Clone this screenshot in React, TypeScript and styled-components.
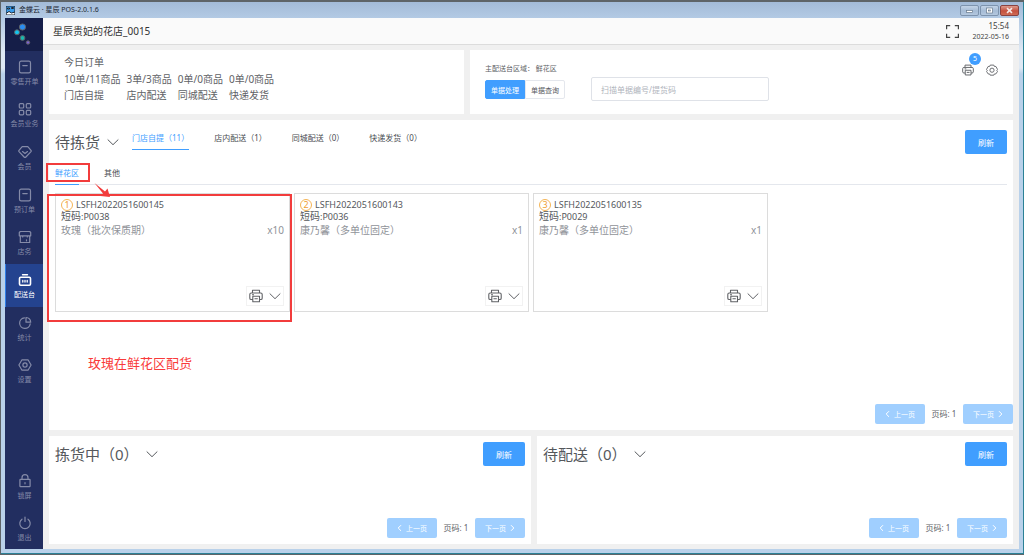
import React from "react";
import styled, { createGlobalStyle, css } from "styled-components";

const Global = createGlobalStyle`
  * { box-sizing: border-box; }
  body { margin: 0; color: #606266; font-family: "Noto Sans", "Noto Sans CJK SC", sans-serif; font-size: 8px; }
  button, input { font: inherit; color: inherit; margin: 0; }
  button { padding: 0; border: 0; background: none; cursor: pointer; }
  h1, h2, h3, p, ul, ol { margin: 0; padding: 0; font-weight: 400; list-style: none; }
  a { color: inherit; text-decoration: none; }
  svg { display: block; flex: none; fill: none; stroke: currentColor; }
`;

/* ---------- window frame ---------- */
const Desktop = styled.div`
  min-height: 100vh;
  display: flex;
  padding: 2px 0 1px 1px;
  background: #5e6468;
`;
const Window = styled.div`
  flex: 1;
  min-width: 0;
  display: flex;
  flex-direction: column;
  padding: 0 4px 4px;
  border-right: 1px solid #2b8196;
  border-bottom: 1px solid #2b8196;
  background: linear-gradient(#a3bbd8 0, #b3cae4 16px, #dfe9f4 50px, #dfe9f4 66px, #b9d1ea 72px);
`;
const TitleBar = styled.header`
  height: 16px;
  display: flex;
  align-items: center;
  gap: 4px;
  padding-left: 1px;
  color: #1c2733;
`;
const TitleText = styled.h1`
  flex: 1;
  font-size: 7px;
  line-height: 12px;
`;
const WindowButtons = styled.div`
  display: flex;
  gap: 1px;
`;
const WindowButton = styled.button<{ $close?: boolean }>`
  width: 19px;
  height: 11px;
  display: grid;
  place-items: center;
  border: 1px solid ${(p) => (p.$close ? "#8a4240" : "#7d93ad")};
  border-radius: 2px;
  color: ${(p) => (p.$close ? "#f4e6e4" : "#f6f8fa")};
  background: ${(p) =>
    p.$close ? "linear-gradient(#dc9a8c, #c4503e 55%, #cf6b54)" : "linear-gradient(#c3d3e6, #a5bbd5 55%, #b4c8df)"};
`;
const Client = styled.div`
  flex: 1;
  display: flex;
  background: #f0f0f0;
`;

/* ---------- sidebar ---------- */
const Sidebar = styled.nav`
  flex: 0 0 38px;
  display: flex;
  flex-direction: column;
  background: #222e60;
`;
const Logo = styled.div`
  height: 33px;
  display: grid;
  place-items: center;
  background: #151e48;
`;
const NavList = styled.ul<{ $rows: number; $height: number }>`
  display: grid;
  grid-template-rows: repeat(${(p) => p.$rows}, 1fr);
  height: ${(p) => p.$height}px;
`;
const Spacer = styled.div`
  flex: 1;
`;
const NavLink = styled.a<{ $active?: boolean }>`
  height: 100%;
  display: flex;
  flex-direction: column;
  align-items: center;
  justify-content: center;
  gap: 3px;
  padding-top: 2px;
  font-size: 7px;
  line-height: 10px;
  color: #858ba8;
  border-left: 1px solid transparent;
  ${(p) =>
    p.$active &&
    css`
      color: #fff;
      background: #24438f;
      border-color: #2f7fe8;
    `}
`;

/* ---------- main area ---------- */
const Main = styled.main`
  flex: 1;
  min-width: 0;
  display: flex;
  flex-direction: column;
`;
const StoreBar = styled.div`
  height: 27px;
  display: flex;
  align-items: center;
  gap: 13px;
  padding: 0 10px;
  background: #fafafa;
  border-bottom: 1px solid #dcdcdc;
  color: #444;
`;
const StoreName = styled.h2`
  flex: 1;
  font-size: 10px;
  line-height: 14px;
  color: #333;
`;
const Clock = styled.time`
  text-align: right;
  font-size: 8px;
  line-height: 11px;
`;
const ClockDate = styled.span`
  display: block;
  font-size: 7px;
`;
const Panels = styled.div`
  flex: 1;
  display: grid;
  grid-template-rows: 64px 1fr 108px;
  gap: 6px;
  padding: 5px 6px;
`;
const PanelRow = styled.div<{ $columns: string }>`
  display: grid;
  grid-template-columns: ${(p) => p.$columns};
  gap: 6px;
`;
const Panel = styled.section`
  background: #fff;
  min-width: 0;
`;

/* ---------- order summary ---------- */
const Summary = styled(Panel)`
  padding: 4px 15px;
  font-size: 10px;
  line-height: 16px;
`;
const SummaryTitle = styled.h3`
  font-size: 10px;
  line-height: 16px;
  margin-bottom: 1px;
`;
const SummaryList = styled.ul`
  display: flex;
  gap: 6px;
`;

/* ---------- search panel ---------- */
const Search = styled(Panel)`
  display: flex;
  align-items: flex-start;
  padding: 12px 15px;
`;
const Mode = styled.div`
  display: flex;
  flex-direction: column;
  gap: 4px;
`;
const AreaText = styled.p`
  font-size: 7px;
  line-height: 14px;
`;
const Segments = styled.div`
  display: flex;
`;
const Segment = styled.button<{ $active?: boolean }>`
  width: 40px;
  height: 19px;
  font-size: 7px;
  border: 1px solid ${(p) => (p.$active ? "#409eff" : "#e4e7ed")};
  border-radius: ${(p) => (p.$active ? "2px 0 0 2px" : "0 2px 2px 0")};
  background: ${(p) => (p.$active ? "#409eff" : "#fff")};
  color: ${(p) => (p.$active ? "#fff" : "#55585e")};
`;
const ScanInput = styled.input`
  width: 178px;
  height: 24px;
  margin: 15px 0 0 26px;
  padding: 0 9px;
  border: 1px solid #dfe2e8;
  border-radius: 2px;
  background: #fff;
  &::placeholder { color: #b0b4bc; opacity: 1; }
`;
const Tools = styled.div`
  flex: 1;
  display: flex;
  justify-content: flex-end;
  gap: 12px;
  padding-top: 2px;
`;
const ToolButton = styled.button`
  position: relative;
`;
const Badge = styled.span`
  position: absolute;
  left: 7px;
  top: -11px;
  width: 12px;
  height: 12px;
  border-radius: 50%;
  background: #409eff;
  color: #fff;
  font-size: 7px;
  line-height: 12px;
  text-align: center;
`;

/* ---------- boards ---------- */
const Board = styled(Panel)`
  position: relative;
  display: flex;
  flex-direction: column;
  padding: 6px;
`;
const WideBoard = styled(Board)`
  padding-right: 0;
`;
const BoardHead = styled.div<{ $wide?: boolean }>`
  display: flex;
  align-items: flex-start;
  padding: ${(p) => (p.$wide ? "4px 6px 0 0" : "0")};
`;
const BoardTitle = styled.button`
  height: 24px;
  display: flex;
  align-items: center;
  gap: 7px;
  margin-right: 13px;
  font-size: 15px;
  line-height: 24px;
  color: #55585c;
`;
const Tabs = styled.div`
  flex: 1;
  display: flex;
  gap: 25px;
`;
const Tab = styled.button<{ $active?: boolean }>`
  height: 20px;
  padding-bottom: 3px;
  font-size: 8px;
  line-height: 16px;
  color: ${(p) => (p.$active ? "#409eff" : "#4a4d52")};
  border-bottom: 1px solid ${(p) => (p.$active ? "#409eff" : "transparent")};
`;
const AreaTabs = styled.div`
  display: flex;
  gap: 25px;
  margin: 12px 6px 8px 0;
  border-bottom: 1px solid #e4e7ed;
`;
const AreaTab = styled(Tab)`
  position: relative;
  height: 19px;
  padding-bottom: 4px;
  margin-bottom: -1px;
  line-height: 14px;
`;
const RefreshButton = styled.button`
  width: 42px;
  height: 24px;
  margin-left: auto;
  border-radius: 2px;
  background: #409eff;
  color: #fff;
`;
const Cards = styled.ul`
  display: grid;
  grid-template-columns: repeat(4, 1fr);
  gap: 4px;
  margin-right: 6px;
`;
const Card = styled.li`
  position: relative;
  min-height: 119px;
  display: flex;
  flex-direction: column;
  padding: 5px;
  border: 1px solid #dcdcdc;
  font-size: 10px;
`;
const CardCode = styled.h3`
  display: flex;
  align-items: center;
  gap: 3px;
  font-size: 9px;
  line-height: 12px;
  color: #55585c;
`;
const Rank = styled.span`
  width: 12px;
  height: 12px;
  border: 1px solid #f5b556;
  border-radius: 50%;
  color: #f0a030;
  line-height: 10px;
  text-align: center;
`;
const ShortCode = styled.p`
  font-size: 10px;
  line-height: 11px;
  color: #55585c;
`;
const Latin = styled.span`
  font-size: 9px;
`;
const Item = styled.p`
  display: flex;
  justify-content: space-between;
  margin-top: 1px;
  line-height: 14px;
  color: #909399;
`;
const CardActions = styled.div`
  display: flex;
  align-items: center;
  gap: 6px;
  height: 20px;
  margin: auto 0 0 auto;
  padding: 0 2px;
  border: 1px solid #f2f2f2;
`;
const Pager = styled.div`
  display: flex;
  justify-content: flex-end;
  align-items: center;
  margin-top: auto;
`;
const PageText = styled.span`
  width: 38px;
  text-align: center;
  white-space: pre;
  line-height: 12px;
`;
const PageButton = styled.button`
  width: 50px;
  height: 20px;
  display: flex;
  align-items: center;
  justify-content: center;
  gap: 4px;
  border-radius: 2px;
  background: #a0cfff;
  color: #fff;
  font-size: 7px;
`;

/* ---------- red annotations drawn over the page ---------- */
const MarkBox = styled.span<{ $inset: string }>`
  position: absolute;
  inset: ${(p) => p.$inset};
  border: 2px solid #f23c3c;
  pointer-events: none;
`;
const Arrow = styled.svg`
  position: absolute;
  left: 39px;
  top: 17px;
  pointer-events: none;
  z-index: 1;
`;
const Note = styled.p`
  position: absolute;
  left: 39px;
  top: 233px;
  font-size: 13px;
  line-height: 20px;
  color: #f93a3a;
`;

/* ---------- icons ---------- */
const NavIcon = ({ children }: { children: React.ReactNode }) => (
  <svg width="14" height="14" viewBox="0 0 14 14" strokeWidth="1.2" strokeLinejoin="round" strokeLinecap="round">
    {children}
  </svg>
);
const orderIcon = (
  <NavIcon>
    <rect x="1.5" y="1.2" width="11" height="11.6" rx="1.6" />
    <path d="M4.8 5.6h4.4" />
  </NavIcon>
);
const gridIcon = (
  <NavIcon>
    <rect x="1.3" y="1.6" width="4.4" height="4.4" rx="1" />
    <rect x="8.3" y="1.6" width="4.4" height="4.4" rx="1" />
    <rect x="1.3" y="8.4" width="4.4" height="4.4" rx="1" />
    <rect x="8.3" y="8.4" width="4.4" height="4.4" rx="1" />
  </NavIcon>
);
const memberIcon = (
  <NavIcon>
    <path d="M4.2 1.6h5.6L13 5.4c.3.5.3.9 0 1.3L7.9 12c-.6.6-1.2.6-1.8 0L1 6.7c-.3-.4-.3-.8 0-1.3z" />
    <path d="M4.5 6.6 7 8.5l2.5-1.9" />
  </NavIcon>
);
const shopIcon = (
  <NavIcon>
    <path d="M2.3 1.5h9.4l1 1v3.300H1.300V2.500zM2.300 5.800v6.700h9.400V5.800M4.700 5.800v1.200M9.300 5.800v1.200M8.500 9.800v1" />
  </NavIcon>
);
const deskIcon = (
  <NavIcon>
    <path d="M4.5 1.7h5" strokeWidth="1.4" />
    <rect x="1.5" y="4.3" width="11" height="8" rx="1.2" strokeWidth="1.6" />
    <path d="M4.8 7.5v1.6M7 7.5v1.6M9.2 7.5v1.6" strokeWidth="1.3" />
  </NavIcon>
);
const chartIcon = (
  <NavIcon>
    <path d="M6.4 1.8A5.3 5.3 0 1 0 12.2 7.8M8 1.5v4.7h4.7A5 5 0 0 0 8 1.5z" />
  </NavIcon>
);
const hexIcon = (
  <NavIcon>
    <path d="M4 1.8h6L13.1 7 10 12.2H4L.9 7z" />
    <circle cx="7" cy="7" r="2.1" />
  </NavIcon>
);
const lockIcon = (
  <NavIcon>
    <rect x="1.9" y="5.3" width="10.2" height="7.4" rx=".6" />
    <path d="M4 5.2V3.7a3 3 0 0 1 6 0v1.5M7 8.6v1.2" />
  </NavIcon>
);
const powerIcon = (
  <NavIcon>
    <path d="M4 3.2a5.2 5.2 0 1 0 6 0M7 1v4.5" />
  </NavIcon>
);
const Chevron = () => (
  <svg width="12" height="12" viewBox="0 0 12 12" strokeWidth="1">
    <path d="M.7 3.5 6 8.7l5.3-5.2" />
  </svg>
);
const PrintIcon = ({ size }: { size: number }) => (
  <svg width={size} height={size} viewBox="0 0 14 14" strokeWidth="1.1" strokeLinejoin="round">
    <path d="M3.5 4V1.3h7V4M3.5 10.5H2.2C1.3 10.5.8 10 .8 9.2V5.4C.8 4.6 1.300 4 2.200 4h9.600c.9 0 1.400.6 1.400 1.400v3.800c0 .8-.5 1.300-1.400 1.300h-1.300M3.800 7.300h6.700v5.500H3.800zM3 5.700h2M5.500 9.800h3.300" />
  </svg>
);
const GearIcon = () => (
  <svg width="12" height="12" viewBox="0 0 12 12" strokeWidth=".9" strokeLinejoin="round">
    <path d="M4.2 1.100h3.600l.5 1.300 1.600.1 1.700 3-.8.9.8.9-1.700 2.600-1.600.1-.5 1.200H4.200l-.5-1.200-1.600-.1L.5 7.300l.8-.9-.8-.9 1.600-3 1.600-.1z" />
    <circle cx="6" cy="6.200" r="2.100" />
  </svg>
);
const Caret = ({ next }: { next?: boolean }) => (
  <svg width="5" height="8" viewBox="0 0 5 8" strokeWidth="1">
    <path d={next ? "M1 1.2 3.8 4 1 6.8" : "M4 1.2 1.2 4 4 6.8"} />
  </svg>
);

/* ---------- data ---------- */
const navItems = [
  { label: "零售开单", icon: orderIcon },
  { label: "会员业务", icon: gridIcon },
  { label: "会员", icon: memberIcon },
  { label: "预订单", icon: orderIcon },
  { label: "店务", icon: shopIcon },
  { label: "配送台", icon: deskIcon, active: true },
  { label: "统计", icon: chartIcon },
  { label: "设置", icon: hexIcon },
];
const sessionItems = [
  { label: "锁屏", icon: lockIcon },
  { label: "退出", icon: powerIcon },
];
const summary = [
  ["10单/11商品", "门店自提"],
  ["3单/3商品", "店内配送"],
  ["0单/0商品", "同城配送"],
  ["0单/0商品", "快递发货"],
];
const tabs = ["门店自提（11）", "店内配送（1）", "同城配送（0）", "快递发货（0）"];
const orders = [
  { code: "LSFH2022051600145", short: "P0038", item: "玫瑰（批次保质期）", qty: "x10" },
  { code: "LSFH2022051600143", short: "P0036", item: "康乃馨（多单位固定）", qty: "x1" },
  { code: "LSFH2022051600135", short: "P0029", item: "康乃馨（多单位固定）", qty: "x1" },
];

type NavEntry = { label: string; icon: React.ReactNode; active?: boolean };

const Nav = ({ items, height }: { items: NavEntry[]; height: number }) => (
  <NavList $rows={items.length} $height={height}>
    {items.map((n) => (
      <li key={n.label}>
        <NavLink href="#" $active={n.active}>
          {n.icon}
          {n.label}
        </NavLink>
      </li>
    ))}
  </NavList>
);

const Pagination = () => (
  <Pager>
    <PageButton>
      <Caret />
      上一页
    </PageButton>
    <PageText>页码: 1</PageText>
    <PageButton>
      下一页
      <Caret next />
    </PageButton>
  </Pager>
);

const SmallBoard = ({ title }: { title: string }) => (
  <Board>
    <BoardHead>
      <BoardTitle aria-haspopup="true">
        {title}
        <Chevron />
      </BoardTitle>
      <RefreshButton>刷新</RefreshButton>
    </BoardHead>
    <Pagination />
  </Board>
);

export default function App() {
  return (
    <Desktop>
      <Global />
      <Window>
        <TitleBar>
          <svg width="9" height="9" viewBox="0 0 9 9" stroke="none">
            <rect width="9" height="9" fill="#3a9bea" />
            <path d="M0 7.5 3 5.500l2.500 1.500L9 6V9H0z" fill="#fff" />
            <path d="M1.500 2h2v1h-2zM5.500 1.500h2v1h-2z" fill="#d8efff" />
          </svg>
          <TitleText>金蝶云 · 星辰 POS-2.0.1.6</TitleText>
          <WindowButtons>
            <WindowButton aria-label="最小化">
              <svg width="7" height="7" viewBox="0 0 7 7">
                <rect x=".5" y="3.5" width="6" height="2" fill="#fff" stroke="#66788c" strokeWidth=".7" />
              </svg>
            </WindowButton>
            <WindowButton aria-label="最大化">
              <svg width="7" height="7" viewBox="0 0 7 7">
                <rect x=".5" y="1" width="6" height="5" fill="#fff" stroke="#66788c" strokeWidth=".7" />
                <rect x="2.5" y="3" width="2" height="1" stroke="#66788c" strokeWidth=".7" />
              </svg>
            </WindowButton>
            <WindowButton aria-label="关闭" $close>
              <svg width="7" height="7" viewBox="0 0 7 7" strokeWidth="1.6">
                <path d="M1 1.2 6 5.8M6 1.2 1 5.8" />
              </svg>
            </WindowButton>
          </WindowButtons>
        </TitleBar>
        <Client>
          <Sidebar>
            <Logo>
              <svg width="20" height="24" viewBox="0 0 20 24" stroke="none">
                <circle cx="8.5" cy="4" r="3.1" fill="#2a8df0" />
                <circle cx="3" cy="9.3" r="2.5" fill="#12c4ee" />
                <circle cx="8.5" cy="15" r="2.4" fill="#16b9b0" />
                <circle cx="14" cy="19.5" r="1.7" fill="#7f62d8" />
              </svg>
            </Logo>
            <Nav items={navItems} height={341} />
            <Spacer />
            <Nav items={sessionItems} height={84} />
          </Sidebar>
          <Main>
            <StoreBar>
              <StoreName>星辰贵妃的花店_0015</StoreName>
              <button aria-label="全屏">
                <svg width="13" height="13" viewBox="0 0 13 13" strokeWidth="1.2">
                  <path d="M.6 4.2V.6h3.6M8.8.6h3.6v3.6M12.4 8.8v3.6H8.8M4.2 12.4H.6V8.8" />
                </svg>
              </button>
              <Clock>
                15:54
                <ClockDate>2022-05-16</ClockDate>
              </Clock>
            </StoreBar>
            <Panels>
              <PanelRow $columns="415fr 543fr">
                <Summary>
                  <SummaryTitle>今日订单</SummaryTitle>
                  <SummaryList>
                    {summary.map(([count, label]) => (
                      <li key={label}>
                        <p>{count}</p>
                        <p>{label}</p>
                      </li>
                    ))}
                  </SummaryList>
                </Summary>
                <Search>
                  <Mode>
                    <AreaText>主配送台区域： 鲜花区</AreaText>
                    <Segments>
                      <Segment $active>单据处理</Segment>
                      <Segment>单据查询</Segment>
                    </Segments>
                  </Mode>
                  <ScanInput aria-label="扫描单据编号/提货码" placeholder="扫描单据编号/提货码" />
                  <Tools>
                    <ToolButton aria-label="打印">
                      <PrintIcon size={12} />
                      <Badge>5</Badge>
                    </ToolButton>
                    <ToolButton aria-label="设置">
                      <GearIcon />
                    </ToolButton>
                  </Tools>
                </Search>
              </PanelRow>
              <WideBoard>
                <BoardHead $wide>
                  <BoardTitle aria-haspopup="true">
                    待拣货
                    <Chevron />
                  </BoardTitle>
                  <Tabs>
                    {tabs.map((t, i) => (
                      <Tab key={t} $active={i === 0}>
                        {t}
                      </Tab>
                    ))}
                  </Tabs>
                  <RefreshButton>刷新</RefreshButton>
                </BoardHead>
                <AreaTabs>
                  <AreaTab $active>
                    鲜花区
                    <MarkBox $inset="-3px -11px 2px -9px" />
                    <Arrow width="18" height="16" viewBox="0 0 18 16" aria-hidden="true">
                      <path d="M.5 0 11 8.5 13.5 5.5 16 14 6.5 13 9 10.5z" fill="#f23c3c" stroke="none" />
                    </Arrow>
                  </AreaTab>
                  <AreaTab>其他</AreaTab>
                </AreaTabs>
                <Cards>
                  {orders.map((o, i) => (
                    <Card key={o.code}>
                      <CardCode>
                        <Rank>{i + 1}</Rank>
                        {o.code}
                      </CardCode>
                      <ShortCode>
                        短码<Latin>:{o.short}</Latin>
                      </ShortCode>
                      <Item>
                        <span>{o.item}</span>
                        <span>{o.qty}</span>
                      </Item>
                      <CardActions>
                        <button aria-label="打印">
                          <PrintIcon size={14} />
                        </button>
                        <button aria-label="展开">
                          <Chevron />
                        </button>
                      </CardActions>
                      {i === 0 && <MarkBox $inset="0 -3px -11px -9px" />}
                    </Card>
                  ))}
                </Cards>
                <Note>玫瑰在鲜花区配货</Note>
                <Pagination />
              </WideBoard>
              <PanelRow $columns="482fr 476fr">
                <SmallBoard title="拣货中（0）" />
                <SmallBoard title="待配送（0）" />
              </PanelRow>
            </Panels>
          </Main>
        </Client>
      </Window>
    </Desktop>
  );
}
